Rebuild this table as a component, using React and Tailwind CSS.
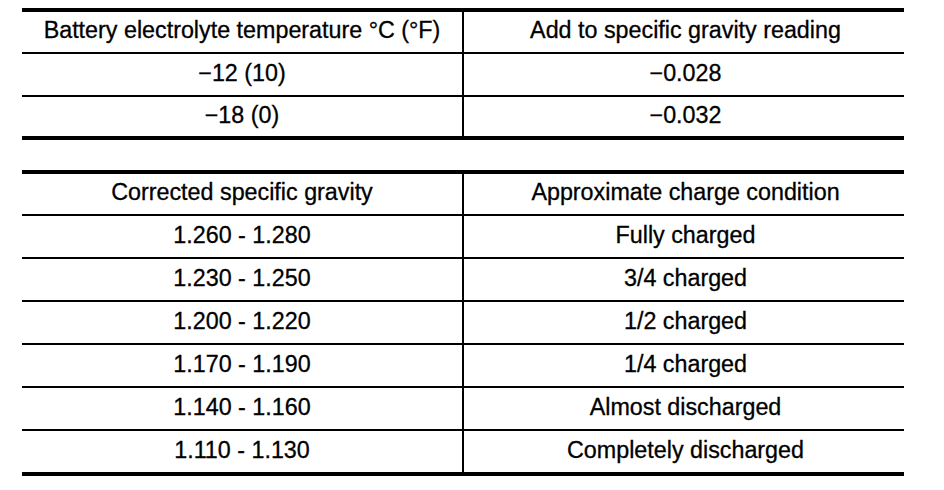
import React from "react";

const font = { fontFamily: '"Liberation Sans", Arial, Helvetica, sans-serif' };

function Row({ left, right, h, border = true, header = false }) {
  return (
    <div className={`flex ${border ? "border-b-2 border-black" : ""}`}>
      <div
        className={`w-[442px] border-r-2 border-black flex items-center justify-center ${h} ${header ? "pb-[5px]" : "pb-[3px]"}`}
      >
        {left}
      </div>
      <div
        className={`w-[440px] flex items-center justify-center pl-[3px] ${h} ${header ? "pb-[5px]" : "pb-[3px]"}`}
      >
        {right}
      </div>
    </div>
  );
}

export default function App() {
  const rows2 = [
    ["1.260 - 1.280", "Fully charged"],
    ["1.230 - 1.250", "3/4 charged"],
    ["1.200 - 1.220", "1/2 charged"],
    ["1.170 - 1.190", "1/4 charged"],
    ["1.140 - 1.160", "Almost discharged"],
    ["1.110 - 1.130", "Completely discharged"],
  ];
  return (
    <div
      className="w-[944px] h-[490px] bg-white text-black text-[23.3px] leading-[26px] pt-[8px] pl-[22px] [-webkit-text-stroke:0.3px_black]"
      style={font}
    >
      <div className="w-[882px] border-t-4 border-b-4 border-black">
        <Row
          header
          h="h-[40px]"
          left="Battery electrolyte temperature °C (°F)"
          right="Add to specific gravity reading"
        />
        <Row h="h-[41px]" left="−12 (10)" right="−0.028" />
        <Row h="h-[39px]" border={false} left="−18 (0)" right="−0.032" />
      </div>
      <div className="w-[882px] mt-[30px] border-t-4 border-b-4 border-black">
        <Row
          header
          h="h-[40px]"
          left="Corrected specific gravity"
          right="Approximate charge condition"
        />
        {rows2.map(([l, r], i) => (
          <Row key={l} h="h-[41px]" border={i < rows2.length - 1} left={l} right={r} />
        ))}
      </div>
    </div>
  );
}
